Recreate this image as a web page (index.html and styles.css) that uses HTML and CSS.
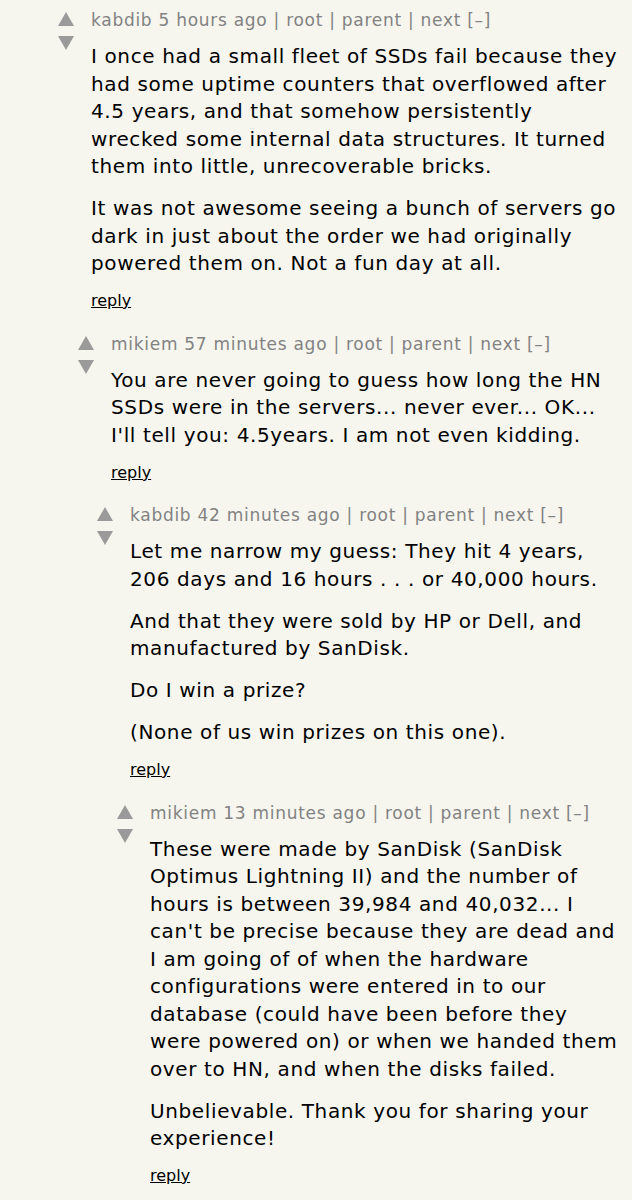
FILE: index.html
```html
<!DOCTYPE html>
<html>
<head>
<meta charset="utf-8">
<link rel="stylesheet" href="styles.css">
</head>
<body>
<div class="thread">
  <div class="comment lvl0">
    <div class="votes">
      <svg class="arrow" viewBox="0 0 16 14"><polygon points="8,0 16,14 0,14"/></svg>
      <svg class="arrow down" viewBox="0 0 16 14"><polygon points="0,0 16,0 8,14"/></svg>
    </div>
    <div class="content">
      <div class="meta">kabdib 5 hours ago | root | parent | next [–]</div>
      <div class="text">
        <p>I once had a small fleet of SSDs fail because they had some uptime counters that overflowed after 4.5 years, and that somehow persistently wrecked some internal data structures. It turned them into little, unrecoverable bricks.</p>
        <p>It was not awesome seeing a bunch of servers go dark in just about the order we had originally powered them on. Not a fun day at all.</p>
      </div>
      <div class="reply"><a href="#">reply</a></div>
    </div>
  </div>
  <div class="comment lvl1">
    <div class="votes">
      <svg class="arrow" viewBox="0 0 16 14"><polygon points="8,0 16,14 0,14"/></svg>
      <svg class="arrow down" viewBox="0 0 16 14"><polygon points="0,0 16,0 8,14"/></svg>
    </div>
    <div class="content">
      <div class="meta">mikiem 57 minutes ago | root | parent | next [–]</div>
      <div class="text">
        <p>You are never going to guess how long the HN SSDs were in the servers... never ever... OK... I'll tell you: 4.5years. I am not even kidding.</p>
      </div>
      <div class="reply"><a href="#">reply</a></div>
    </div>
  </div>
  <div class="comment lvl2">
    <div class="votes">
      <svg class="arrow" viewBox="0 0 16 14"><polygon points="8,0 16,14 0,14"/></svg>
      <svg class="arrow down" viewBox="0 0 16 14"><polygon points="0,0 16,0 8,14"/></svg>
    </div>
    <div class="content">
      <div class="meta">kabdib 42 minutes ago | root | parent | next [–]</div>
      <div class="text">
        <p>Let me narrow my guess: They hit 4 years, 206 days and 16 hours . . . or 40,000 hours.</p>
        <p>And that they were sold by HP or Dell, and manufactured by SanDisk.</p>
        <p>Do I win a prize?</p>
        <p>(None of us win prizes on this one).</p>
      </div>
      <div class="reply"><a href="#">reply</a></div>
    </div>
  </div>
  <div class="comment lvl3">
    <div class="votes">
      <svg class="arrow" viewBox="0 0 16 14"><polygon points="8,0 16,14 0,14"/></svg>
      <svg class="arrow down" viewBox="0 0 16 14"><polygon points="0,0 16,0 8,14"/></svg>
    </div>
    <div class="content">
      <div class="meta">mikiem 13 minutes ago | root | parent | next [–]</div>
      <div class="text">
        <p>These were made by SanDisk (SanDisk Optimus Lightning II) and the number of hours is between 39,984 and 40,032... I can't be precise because they are dead and I am going of of when the hardware configurations were entered in to our database (could have been before they were powered on) or when we handed them over to HN, and when the disks failed.</p>
        <p>Unbelievable. Thank you for sharing your experience!</p>
      </div>
      <div class="reply"><a href="#">reply</a></div>
    </div>
  </div>
</div>
</body>
</html>
```
FILE: styles.css
```css
html, body {
  margin: 0;
  padding: 0;
  background: #f6f6ef;
}
body {
  font-family: "DejaVu Sans", Verdana, sans-serif;
  color: #000;
}
.thread {
  padding: 0 10px 0 58px;
}
.comment {
  display: flex;
  align-items: flex-start;
  padding: 8px 0 12.5px 0;
}
.lvl1 { padding-left: 20px; }
.lvl2 { padding-left: 39px; }
.lvl3 { padding-left: 59px; }
.votes {
  flex: 0 0 16px;
  display: flex;
  flex-direction: column;
  gap: 10px;
  margin-top: 4px;
  margin-right: 17px;
}
.arrow {
  display: block;
  width: 16px;
  height: 14px;
  fill: #9a9a9a;
}
.content {
  flex: 1;
  min-width: 0;
}
.meta {
  font-size: 17px;
  line-height: 24px;
  letter-spacing: 0.72px;
  color: #828282;
  margin-bottom: 11px;
  white-space: nowrap;
}
.text {
  font-size: 20px;
  line-height: 27.5px;
  letter-spacing: 0.62px;
}
.text p {
  margin: 0 0 14.5px 0;
}
.text p:last-child {
  margin-bottom: 0;
}
.reply {
  font-size: 16px;
  line-height: 20px;
  margin-top: 13.5px;
}
.reply a {
  color: #000;
  text-decoration: underline;
}
```
